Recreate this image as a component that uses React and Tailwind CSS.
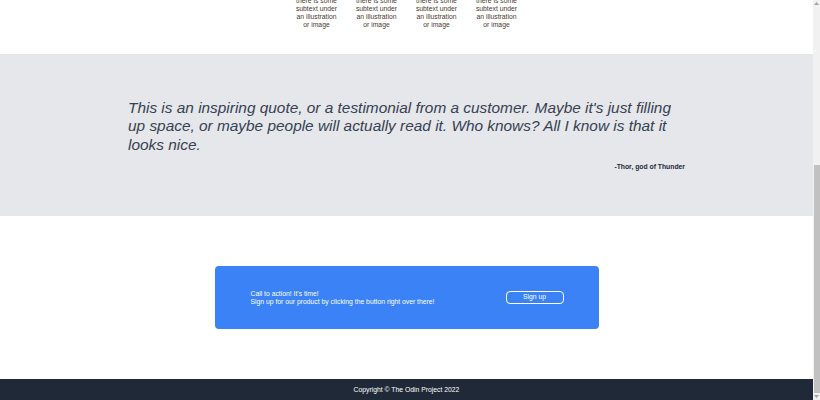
import React, { useLayoutEffect, useRef } from "react";

const info = [1, 2, 3, 4];

const App = () => {
  const pageRef = useRef(null);

  // the reference is taken scrolled to the very bottom of the page
  useLayoutEffect(() => {
    if (pageRef.current) {
      pageRef.current.scrollTop = pageRef.current.scrollHeight;
    }
  }, []);

  return (
    <div className="flex h-[400px] w-[820px] bg-white font-['Liberation_Sans',Arial,sans-serif]">
      <div ref={pageRef} className="h-[400px] flex-1 overflow-hidden">
        <div className="h-[190px] bg-[#1f2937] px-[120px] pt-[10px] text-white">
          <div className="flex items-center justify-between">
            <div className="text-[12px] font-bold">Header Logo</div>
            <div className="flex gap-[10px] text-[8px] text-[#e5e7eb]">
              <span>header link one</span>
              <span>header link two</span>
              <span>header link three</span>
            </div>
          </div>
          <div className="mt-[30px] flex items-center justify-between">
            <div className="w-[260px]">
              <h1 className="text-[24px] font-extrabold leading-[28px] text-[#f9faf8]">This website is awesome</h1>
              <p className="mt-[4px] text-[9px] text-[#e5e7eb]">This website has some subtext that goes here under the main title.</p>
              <button className="mt-[8px] rounded-[4px] bg-[#3b82f6] px-[16px] py-[2px] text-[8px] text-white">Sign up</button>
            </div>
            <div className="flex h-[90px] w-[170px] items-center justify-center bg-[#6b7280] text-[9px] text-[#e5e7eb]">
              This is a placeholder for an image
            </div>
          </div>
        </div>

        <div className="flex flex-col items-center pt-[6px] pb-[25px]">
          <h2 className="text-[15px] font-extrabold leading-[18px] text-[#1f2937]">Some random information.</h2>
          <div className="mt-[5px] flex gap-[10px]">
            {info.map((i) => (
              <div key={i} className="flex w-[50px] flex-col items-center">
                <div className="h-[50px] w-[50px] rounded-[8px] border-[2px] border-[#3b82f6]"></div>
                <p className="mt-[4px] w-[46px] text-center text-[6.8px] leading-[8px] text-[#4b3a2e]">
                  there is some subtext under an illustration or image
                </p>
              </div>
            ))}
          </div>
        </div>

        <div className="bg-[#e5e7eb] pt-[45px] pb-[45px]">
          <div className="mx-auto w-[557px]">
            <p className="text-[15.4px] italic leading-[18.4px] text-[#374151]">
              This is an inspiring quote, or a testimonial from a customer. Maybe it's just filling up space, or maybe people will actually read it. Who knows? All I know is that it looks nice.
            </p>
            <p className="mt-[9px] text-right text-[6.8px] font-bold leading-[8px] text-[#1f2937]">-Thor, god of Thunder</p>
          </div>
        </div>

        <div className="py-[50px]">
          <div className="mx-auto flex h-[63px] w-[384px] items-center justify-between rounded-[4px] bg-[#3b82f6] pl-[36px] pr-[35px] text-white">
            <div className="text-[6.8px] leading-[8px]">
              <p>Call to action! It's time!</p>
              <p>Sign up for our product by clicking the button right over there!</p>
            </div>
            <button className="h-[13px] w-[58px] rounded-[4px] border border-white text-[6.8px] leading-none text-white">
              Sign up
            </button>
          </div>
        </div>

        <div className="flex h-[21px] items-center justify-center bg-[#1f2937] text-[6.8px] font-medium text-white">
          Copyright © The Odin Project 2022
        </div>
      </div>

      {/* scrollbar, scrolled to the end */}
      <div className="flex h-[400px] w-[7px] flex-col bg-[#f1f1f1]">
        <div className="flex h-[7px] items-center justify-center">
          <svg width="5" height="3" viewBox="0 0 5 3">
            <path d="M0 3 L2.5 0 L5 3 Z" fill="#a3a3a3" />
          </svg>
        </div>
        <div className="mt-auto h-[228px] w-[6px] self-center bg-[#c1c1c1]"></div>
        <div className="flex h-[7px] items-center justify-center">
          <svg width="5" height="3" viewBox="0 0 5 3">
            <path d="M0 0 L2.5 3 L5 0 Z" fill="#a3a3a3" />
          </svg>
        </div>
      </div>
    </div>
  );
};

export default App;
